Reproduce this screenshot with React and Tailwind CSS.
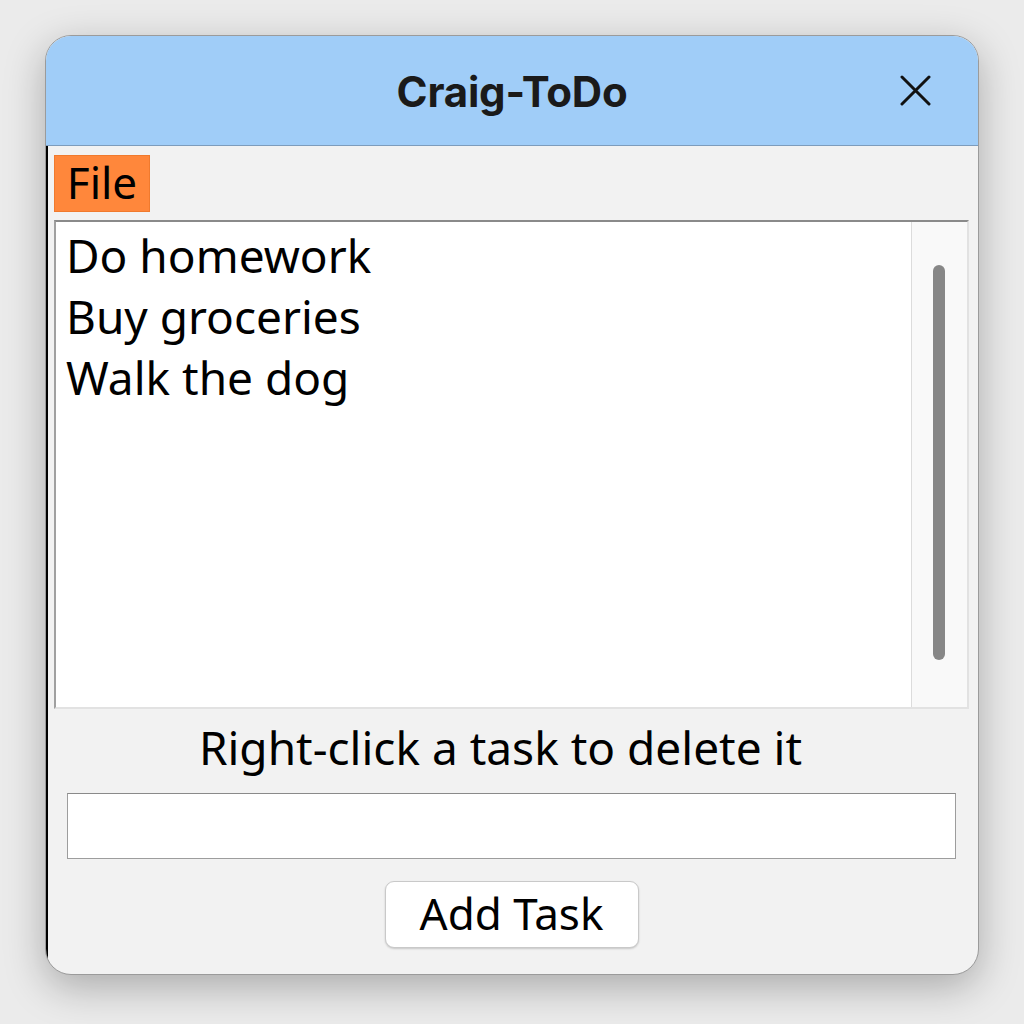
import React from "react";

export default function App() {
  const tasks = ["Do homework", "Buy groceries", "Walk the dog"];
  return (
    <div className="w-[1024px] h-[1024px] bg-[#ebebeb] pt-[35px] pl-[45px]" style={{ fontFamily: '"Noto Sans", sans-serif' }}>
      <div className="w-[934px] h-[940px] rounded-[26px] border border-[#9b9b9b] overflow-hidden bg-[#f2f2f2] flex flex-col shadow-[0_12px_40px_rgba(0,0,0,0.28)]">
        <div className="h-[110px] shrink-0 bg-[#a0cdf8] border-b border-[#7d9cbc] grid grid-cols-[1fr_auto_1fr] items-center">
          <div />
          <div className="text-[42px] font-bold text-[#1a1a1a] tracking-[-0.2px] pt-[2px]" style={{ fontFamily: 'Inter, "Liberation Sans", sans-serif' }}>
            Craig-ToDo
          </div>
          <div className="flex justify-end pr-[47px]">
            <svg width="31" height="31" viewBox="0 0 31 31" fill="none" stroke="#111" strokeWidth="3" strokeLinecap="round">
              <path d="M2 2 L29 29 M29 2 L2 29" />
            </svg>
          </div>
        </div>
        <div className="flex-1 flex flex-col border-l-2 border-black pl-[6px] pr-[9px]">
          <div className="pt-[9px]">
            <div className="w-[96px] h-[57px] bg-[#ff873b] border border-[#f07a2e] flex items-center justify-center text-[44px] leading-none text-black pb-[3px]">
              File
            </div>
          </div>
          <div className="mt-[8px] h-[489px] flex border-t-2 border-l-2 border-t-[#8a8a8a] border-l-[#a0a0a0] border-r-2 border-b-2 border-r-[#e2e2e2] border-b-[#e2e2e2] bg-white">
            <div className="flex-1 pl-[10px] pt-[3px] text-[46px] leading-[61px] text-black">
              {tasks.map((t) => (
                <div key={t}>{t}</div>
              ))}
            </div>
            <div className="w-[56px] bg-[#f9f9f9] border-l border-[#dcdcdc] flex justify-center pt-[43px] pb-[47px] pr-[2px]">
              <div className="w-[12px] h-full rounded-full bg-[#878787]" />
            </div>
          </div>
          <div className="mt-[8px] text-center text-[46px] leading-[60px] text-black pr-[22px]">
            Right-click a task to delete it
          </div>
          <div className="mt-[16px] mx-[13px] h-[66px] bg-white border border-[#9d9d9d] border-t-[#8a8a8a]" />
          <div className="mt-[22px] flex justify-center">
            <div className="w-[254px] h-[67px] bg-white rounded-[9px] border border-[#c9c9c9] shadow-[0_1px_2px_rgba(0,0,0,0.18)] flex items-center justify-center text-[44px] leading-none text-black pb-[3px]">
              Add Task
            </div>
          </div>
        </div>
      </div>
    </div>
  );
}
